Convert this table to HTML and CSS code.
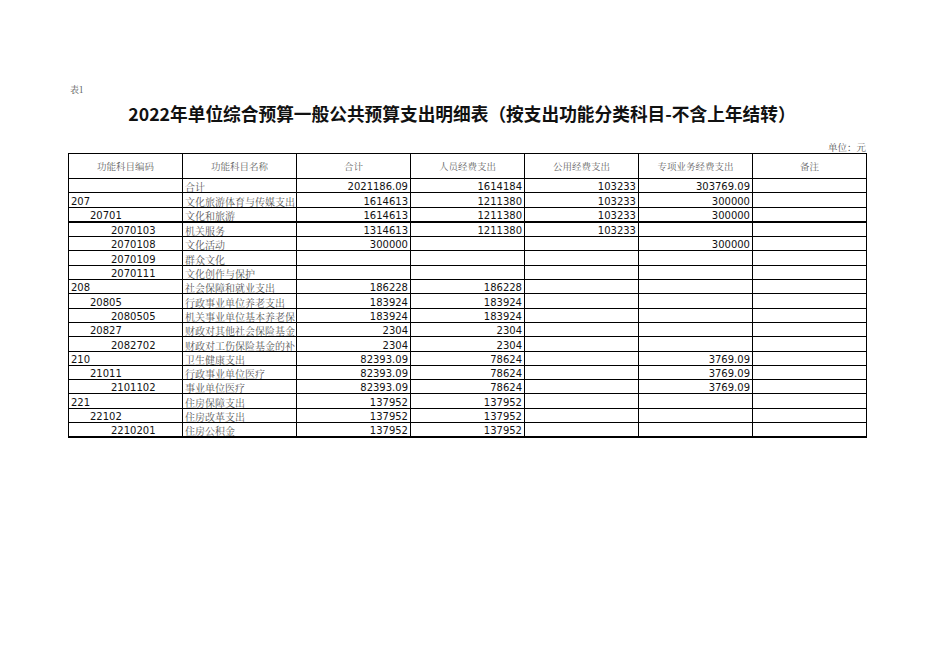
FILE: index.html
```html
<!DOCTYPE html>
<html lang="zh-CN">
<head>
<meta charset="utf-8">
<title>2022年单位综合预算一般公共预算支出明细表</title>
<link rel="stylesheet" href="styles.css">
</head>
<body>
<div class="page">
  <div class="label">表1</div>
  <h1 class="title">2022年单位综合预算一般公共预算支出明细表（按支出功能分类科目-不含上年结转）</h1>
  <div class="unit">单位：元</div>
  <table class="sheet">
    <colgroup>
      <col class="c"><col class="c"><col class="c"><col class="c"><col class="c"><col class="c"><col class="c">
    </colgroup>
    <thead>
      <tr>
        <th>功能科目编码</th><th>功能科目名称</th><th>合计</th><th>人员经费支出</th><th>公用经费支出</th><th>专项业务经费支出</th><th>备注</th>
      </tr>
    </thead>
    <tbody>
      <tr><td class="code"></td><td class="name">合计</td><td class="num">2021186.09</td><td class="num">1614184</td><td class="num">103233</td><td class="num">303769.09</td><td></td></tr>
      <tr><td class="code l1">207</td><td class="name">文化旅游体育与传媒支出</td><td class="num">1614613</td><td class="num">1211380</td><td class="num">103233</td><td class="num">300000</td><td></td></tr>
      <tr class="thick"><td class="code l2">20701</td><td class="name">文化和旅游</td><td class="num">1614613</td><td class="num">1211380</td><td class="num">103233</td><td class="num">300000</td><td></td></tr>
      <tr><td class="code l3">2070103</td><td class="name">机关服务</td><td class="num">1314613</td><td class="num">1211380</td><td class="num">103233</td><td class="num"></td><td></td></tr>
      <tr><td class="code l3">2070108</td><td class="name">文化活动</td><td class="num">300000</td><td class="num"></td><td class="num"></td><td class="num">300000</td><td></td></tr>
      <tr><td class="code l3">2070109</td><td class="name">群众文化</td><td class="num"></td><td class="num"></td><td class="num"></td><td class="num"></td><td></td></tr>
      <tr><td class="code l3">2070111</td><td class="name">文化创作与保护</td><td class="num"></td><td class="num"></td><td class="num"></td><td class="num"></td><td></td></tr>
      <tr><td class="code l1">208</td><td class="name">社会保障和就业支出</td><td class="num">186228</td><td class="num">186228</td><td class="num"></td><td class="num"></td><td></td></tr>
      <tr><td class="code l2">20805</td><td class="name">行政事业单位养老支出</td><td class="num">183924</td><td class="num">183924</td><td class="num"></td><td class="num"></td><td></td></tr>
      <tr><td class="code l3">2080505</td><td class="name"><div class="clip">机关事业单位基本养老保险缴费支出</div></td><td class="num">183924</td><td class="num">183924</td><td class="num"></td><td class="num"></td><td></td></tr>
      <tr><td class="code l2">20827</td><td class="name"><div class="clip">财政对其他社会保险基金的补助</div></td><td class="num">2304</td><td class="num">2304</td><td class="num"></td><td class="num"></td><td></td></tr>
      <tr><td class="code l3">2082702</td><td class="name"><div class="clip">财政对工伤保险基金的补助</div></td><td class="num">2304</td><td class="num">2304</td><td class="num"></td><td class="num"></td><td></td></tr>
      <tr><td class="code l1">210</td><td class="name">卫生健康支出</td><td class="num">82393.09</td><td class="num">78624</td><td class="num"></td><td class="num">3769.09</td><td></td></tr>
      <tr><td class="code l2">21011</td><td class="name">行政事业单位医疗</td><td class="num">82393.09</td><td class="num">78624</td><td class="num"></td><td class="num">3769.09</td><td></td></tr>
      <tr><td class="code l3">2101102</td><td class="name">事业单位医疗</td><td class="num">82393.09</td><td class="num">78624</td><td class="num"></td><td class="num">3769.09</td><td></td></tr>
      <tr><td class="code l1">221</td><td class="name">住房保障支出</td><td class="num">137952</td><td class="num">137952</td><td class="num"></td><td class="num"></td><td></td></tr>
      <tr><td class="code l2">22102</td><td class="name">住房改革支出</td><td class="num">137952</td><td class="num">137952</td><td class="num"></td><td class="num"></td><td></td></tr>
      <tr class="last"><td class="code l3">2210201</td><td class="name">住房公积金</td><td class="num">137952</td><td class="num">137952</td><td class="num"></td><td class="num"></td><td></td></tr>
    </tbody>
  </table>
</div>
</body>
</html>
```
FILE: styles.css
```css
html, body {
  margin: 0;
  padding: 0;
  background: #ffffff;
}

.page {
  width: 798px;
  padding: 84px 0 0 68px;
  font-family: "Noto Serif CJK SC", "Noto Sans CJK SC", serif;
  color: #555;
}

.label {
  height: 12px;
  line-height: 12px;
  font-size: 9px;
  padding-left: 2px;
  color: #555;
}

.title {
  margin: 2px 0 0 -10px;
  height: 30px;
  line-height: 30px;
  font-size: 17.7px;
  font-weight: 700;
  text-align: center;
  color: #111;
  font-family: "Noto Sans CJK SC", sans-serif;
}

.unit {
  margin-top: 13px;
  height: 12px;
  line-height: 12px;
  font-size: 9.5px;
  text-align: right;
  color: #555;
}

.sheet {
  border-collapse: collapse;
  table-layout: fixed;
  width: 799px;
  border: 1px solid #000;
  border-bottom: 2px solid #000;
}

.sheet col.c {
  width: 114px;
}

.sheet th {
  height: 24px;
  padding: 0;
  border: 1px solid #000;
  font-weight: 400;
  font-size: 9.5px;
  color: #666;
  text-align: center;
  vertical-align: middle;
}

.sheet td {
  height: 13.3px;
  padding: 0 2px;
  border: 1px solid #000;
  line-height: 10px;
  vertical-align: bottom;
  white-space: nowrap;
  overflow: hidden;
}

.sheet tr.thick td {
  border-bottom: 2px solid #000;
}

.sheet tr.last td {
  border-bottom: 2px solid #000;
}

.code,
.num {
  font-family: "DejaVu Sans", Verdana, sans-serif;
  font-size: 10px;
  color: #111;
}

.code.l1 { padding-left: 2px; }
.code.l2 { padding-left: 21px; }
.code.l3 { padding-left: 42px; }

.num {
  text-align: right;
  padding-right: 1px;
}

.name {
  font-size: 10px;
  color: #555;
}

.clip {
  width: 110px;
  overflow: hidden;
  white-space: nowrap;
}
```
